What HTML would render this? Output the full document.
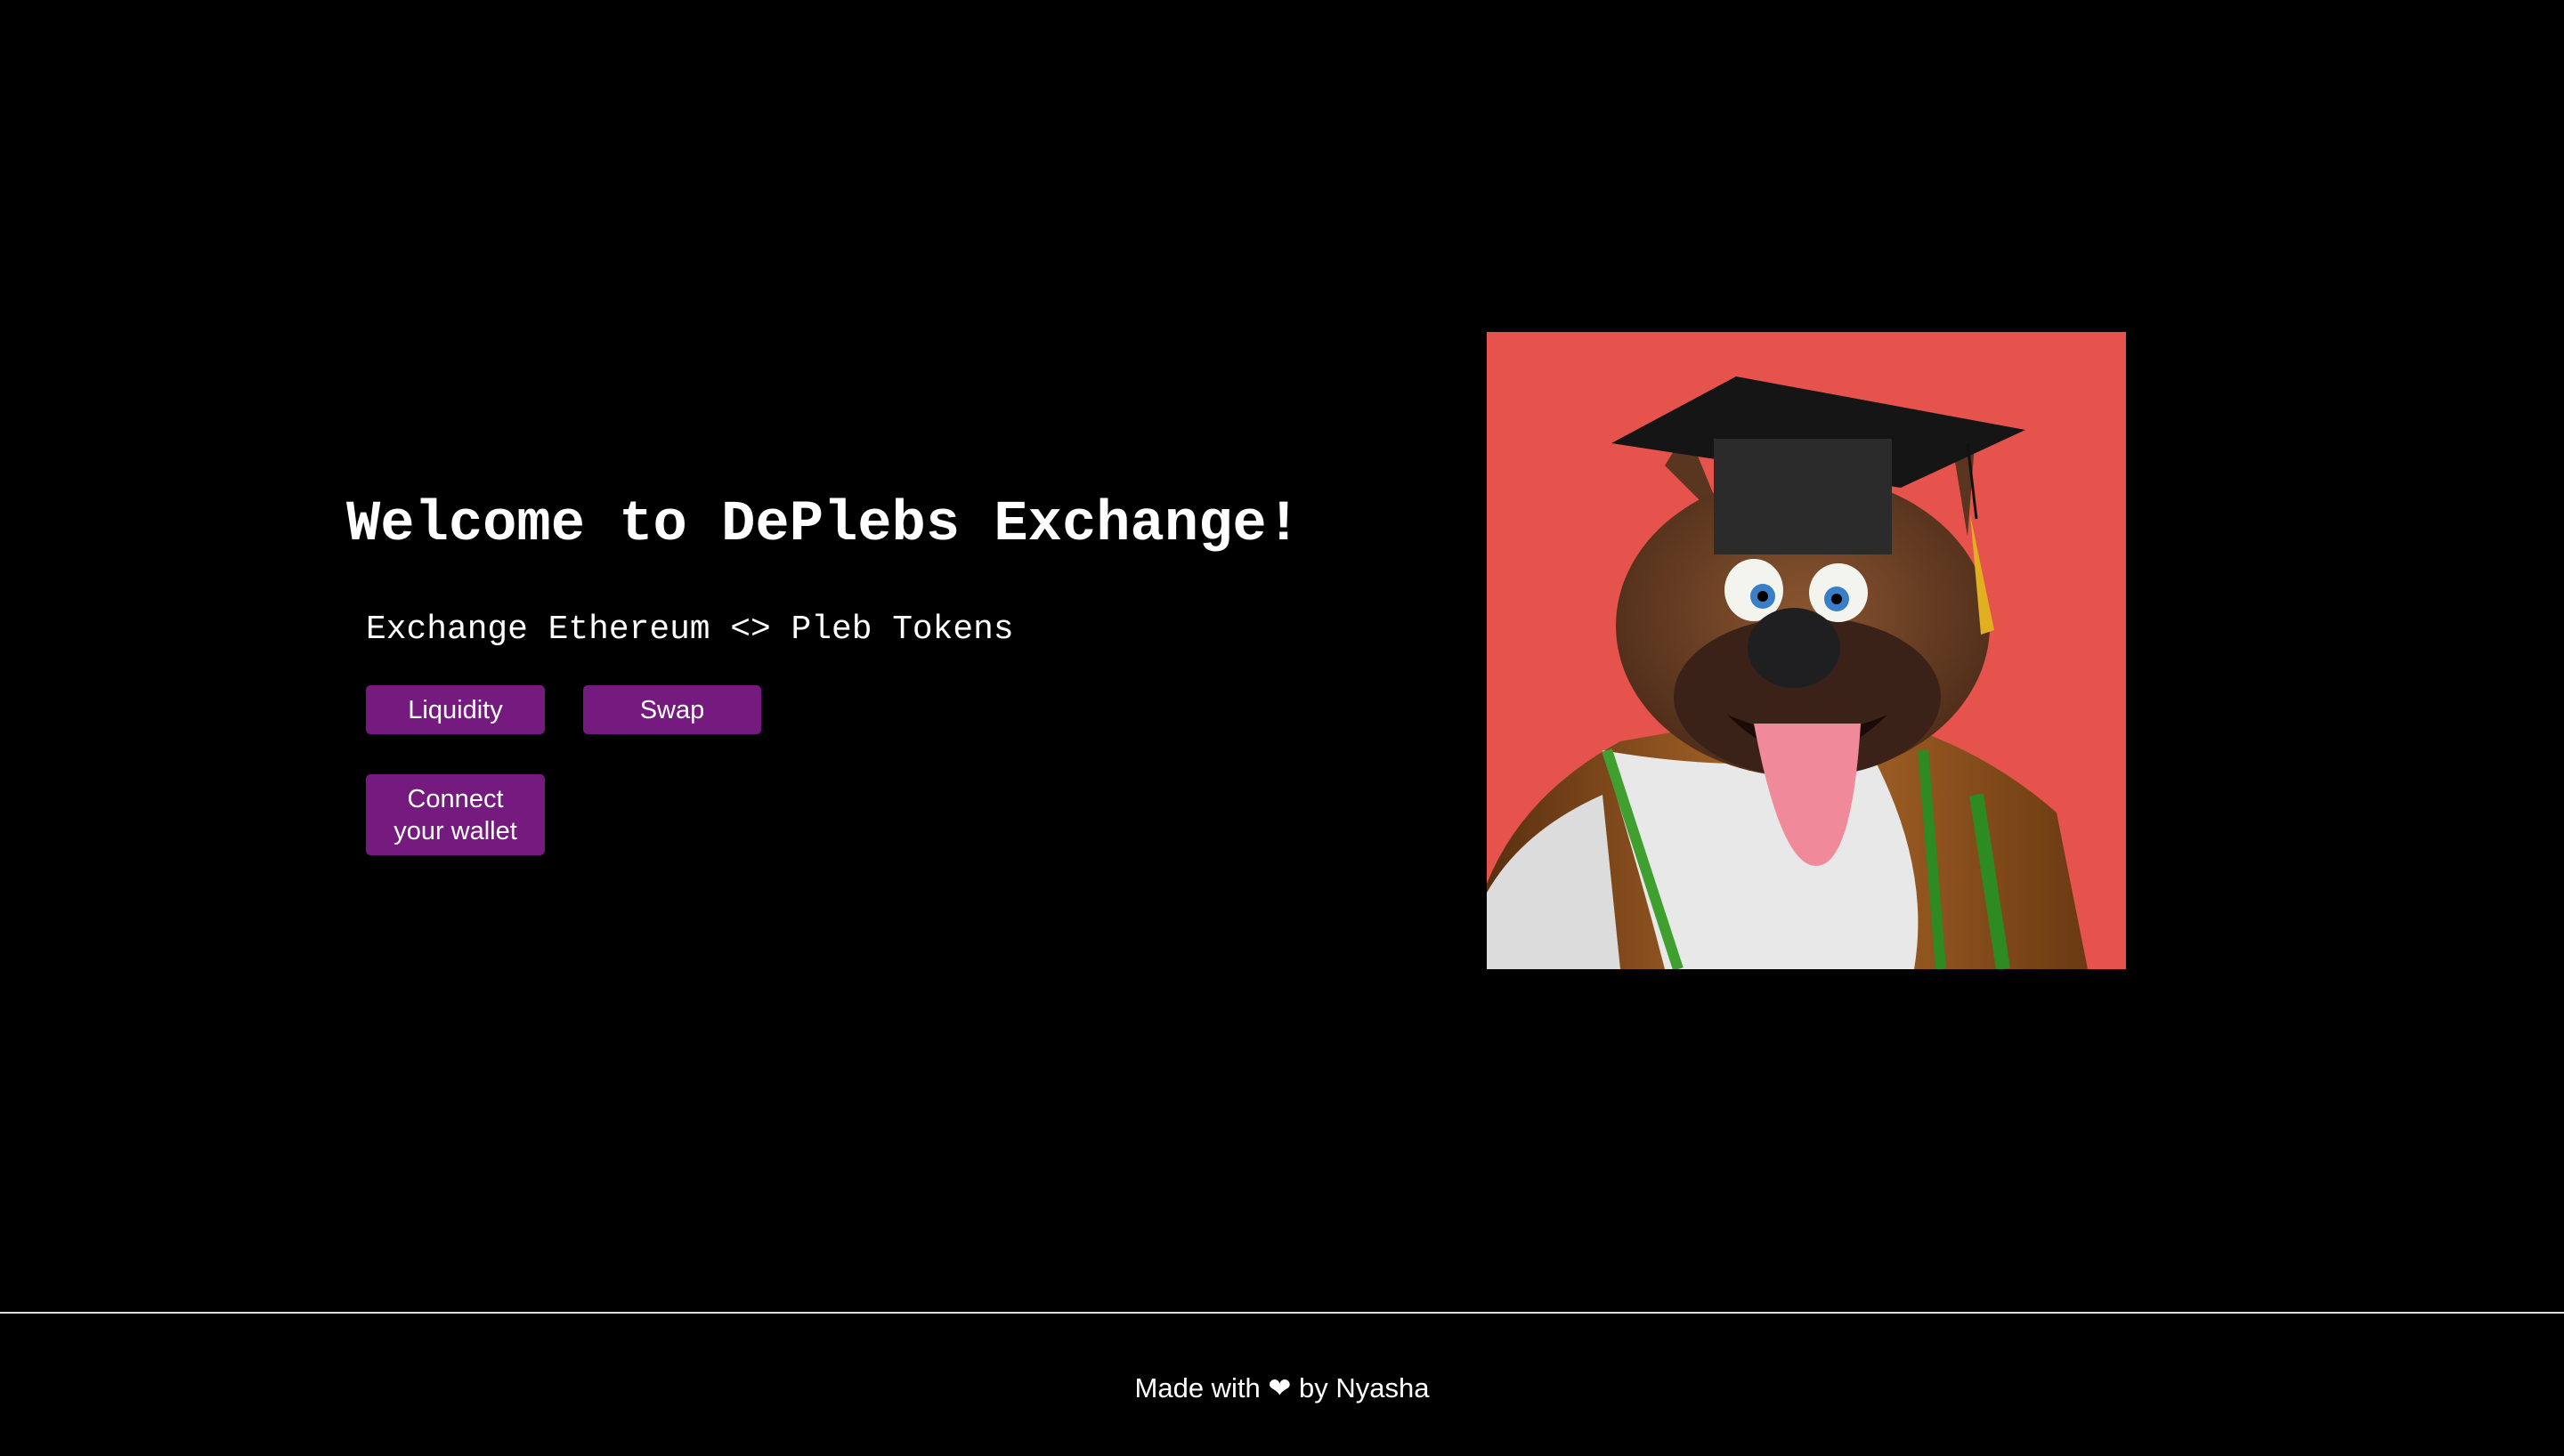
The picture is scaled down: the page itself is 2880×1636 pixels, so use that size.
<!DOCTYPE html>
<html><head><meta charset="utf-8"><style>
html,body{margin:0;padding:0;background:#000;width:2880px;height:1636px;overflow:hidden;position:relative;color:#fff}
.t{position:absolute;left:389px;top:554px;font:bold 63.8px "Liberation Mono",monospace;white-space:nowrap;letter-spacing:0}
.s{position:absolute;left:411px;top:686px;font:37.9px "Liberation Mono",monospace;white-space:nowrap}
.b{position:absolute;background:#751a7f;border-radius:5px;color:#fff;font:29px "Liberation Sans",sans-serif;display:flex;align-items:center;justify-content:center;text-align:center;line-height:36px}
.line{position:absolute;left:0;top:1474px;width:2880px;height:2px;background:#ddd}
.f{position:absolute;top:1542px;width:2880px;text-align:center;font:31px "Liberation Sans",sans-serif}
svg{position:absolute;left:1670px;top:373px}
</style></head><body>
<div class="t">Welcome to DePlebs Exchange!</div>
<div class="s">Exchange Ethereum &lt;&gt; Pleb Tokens</div>
<div class="b" style="left:411px;top:770px;width:201px;height:55px">Liquidity</div>
<div class="b" style="left:655px;top:770px;width:200px;height:55px">Swap</div>
<div class="b" style="left:411px;top:870px;width:201px;height:91px">Connect<br>your wallet</div>
<svg width="718" height="716" viewBox="0 0 718 716">
<defs>
<radialGradient id="fur" cx="50%" cy="45%" r="60%"><stop offset="0" stop-color="#8a5530"/><stop offset="1" stop-color="#4a2a18"/></radialGradient>
<linearGradient id="robe" x1="0" x2="1"><stop offset="0" stop-color="#5a3010"/><stop offset=".5" stop-color="#b06a2a"/><stop offset="1" stop-color="#6a3a12"/></linearGradient>
</defs>
<rect width="718" height="716" fill="#e5534c"/>
<path d="M0 716 L0 620 Q40 520 150 460 L320 430 L460 440 Q560 470 640 540 L675 716Z" fill="url(#robe)"/>
<path d="M130 470 Q170 600 200 716 L480 716 Q500 600 430 470 Q300 500 130 470Z" fill="#e8e8e8"/>
<path d="M0 716 L0 630 Q40 560 130 520 L150 716Z" fill="#dcdcdc"/>
<path d="M135 470 L215 716" stroke="#3fa030" stroke-width="12" fill="none"/>
<path d="M550 520 L580 716" stroke="#2e8a22" stroke-width="16" fill="none"/>
<path d="M490 470 L510 716" stroke="#2e8a22" stroke-width="12" fill="none"/>
<path d="M200 150 L225 110 L270 220Z M525 140 L550 100 L540 230Z" fill="#5a3520"/>
<ellipse cx="355" cy="330" rx="210" ry="170" fill="url(#fur)"/>
<ellipse cx="360" cy="410" rx="150" ry="90" fill="#3a2218"/>
<path d="M270 430 Q360 520 450 430 Q360 470 270 430Z" fill="#1a0a08"/>
<path d="M300 440 Q330 600 370 600 Q410 600 420 440Z" fill="#f08a9a"/>
<ellipse cx="300" cy="290" rx="33" ry="35" fill="#f4f4ee"/>
<ellipse cx="395" cy="293" rx="33" ry="33" fill="#f4f4ee"/>
<circle cx="310" cy="297" r="14" fill="#3a7ec8"/><circle cx="393" cy="300" r="14" fill="#3a7ec8"/>
<circle cx="310" cy="297" r="6" fill="#000"/><circle cx="393" cy="300" r="6" fill="#000"/>
<ellipse cx="345" cy="355" rx="52" ry="45" fill="#1f1f22"/>
<path d="M140 125 L280 50 L605 110 L465 175Z" fill="#151515"/>
<rect x="255" y="120" width="200" height="130" fill="#2b2b2b"/>
<path d="M540 125 L550 210" stroke="#111" stroke-width="3"/>
<path d="M543 205 L570 335 L555 340Z" fill="#e0b020"/>
</svg>
<div class="line"></div>
<div class="f">Made with ❤ by Nyasha</div>
</body></html>
